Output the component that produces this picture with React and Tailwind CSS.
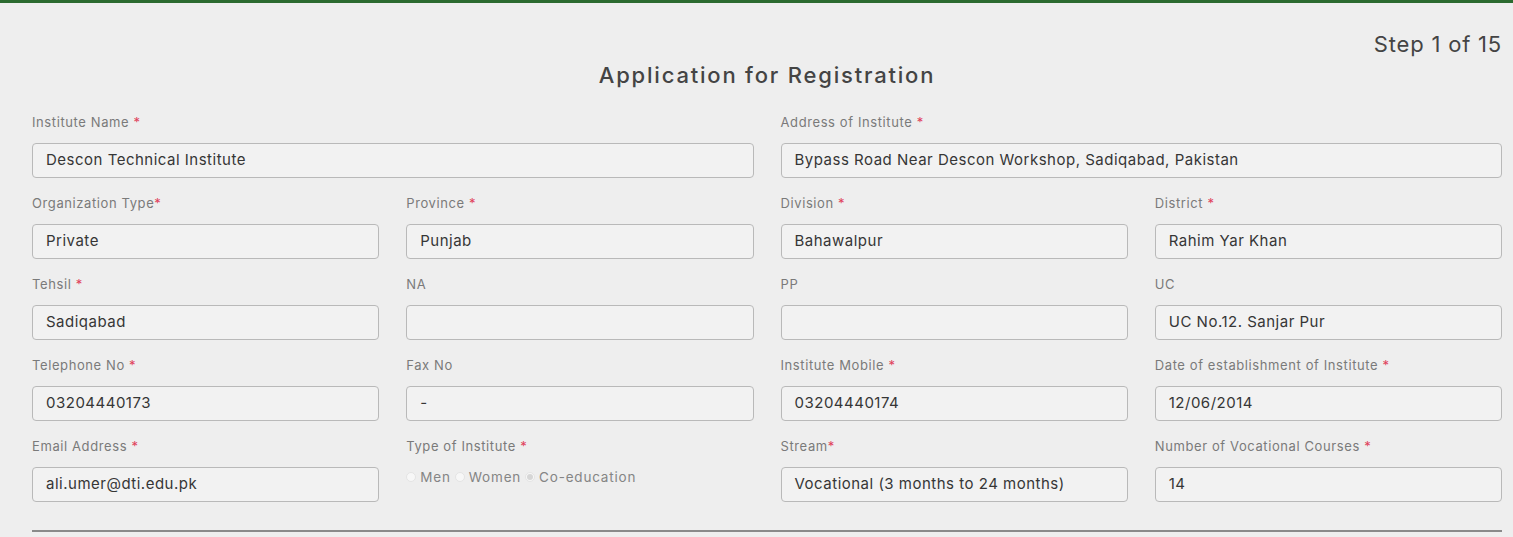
import React from "react";

const fields = [
  { label: "Institute Name", req: " *", value: "Descon Technical Institute", span: 2 },
  { label: "Address of Institute", req: " *", value: "Bypass Road Near Descon Workshop, Sadiqabad, Pakistan", span: 2 },
  { label: "Organization Type", req: "*", value: "Private" },
  { label: "Province", req: " *", value: "Punjab" },
  { label: "Division", req: " *", value: "Bahawalpur" },
  { label: "District", req: " *", value: "Rahim Yar Khan" },
  { label: "Tehsil", req: " *", value: "Sadiqabad" },
  { label: "NA", value: "" },
  { label: "PP", value: "" },
  { label: "UC", value: "UC No.12. Sanjar Pur" },
  { label: "Telephone No", req: " *", value: "03204440173" },
  { label: "Fax No", value: "-" },
  { label: "Institute Mobile", req: " *", value: "03204440174" },
  { label: "Date of establishment of Institute", req: " *", value: "12/06/2014" },
  { label: "Email Address", req: " *", value: "ali.umer@dti.edu.pk" },
  { label: "Type of Institute", req: " *", radio: true },
  { label: "Stream", req: "*", value: "Vocational (3 months to 24 months)" },
  { label: "Number of Vocational Courses", req: " *", value: "14" },
];

const Radio = ({ label, checked }) => (
  <label className="flex items-center gap-[4px]">
    <span className="w-[10px] h-[10px] rounded-full border border-[#e4e4e4] bg-[#f7f7f7] flex items-center justify-center">
      {checked && <span className="w-[6px] h-[6px] rounded-full bg-[#d6d6d6]" />}
    </span>
    <span>{label}</span>
  </label>
);

const Field = ({ field }) => (
  <div className={field.span === 2 ? "col-span-2" : ""}>
    <div className="text-[13px] leading-4 tracking-[0.6px] text-[#7a7a7a] mb-[13px]">
      {field.label}
      {field.req && <span className="text-[#e0405a]">{field.req}</span>}
    </div>
    {field.radio ? (
      <div className="flex items-center gap-[4px] text-[13.5px] tracking-[0.8px] text-[#858585] h-[20px]">
        <Radio label="Men" />
        <Radio label="Women" />
        <Radio label="Co-education" checked />
      </div>
    ) : (
      <div className="h-[35px] rounded-[4px] border border-[#b9b9b9] bg-[#f2f2f2] px-[13px] flex items-center text-[15px] tracking-[0.5px] text-[#363636]">
        {field.value}
      </div>
    )}
  </div>
);

export default function App() {
  return (
    <div
      className="min-h-[537px] bg-[#eeeeee] border-t-[3px] border-[#2b6a2f] pl-[32px] pr-[11px]"
      style={{ fontFamily: "Inter, 'Noto Sans', sans-serif" }}
    >
      <div className="flex justify-end pt-[27px]">
        <div className="text-[22px] leading-7 tracking-[0.8px] text-[#444]">Step 1 of 15</div>
      </div>
      <h1 className="text-center text-[22px] leading-7 tracking-[1.8px] font-medium text-[#444] mt-[3px]">
        Application for Registration
      </h1>
      <div className="grid grid-cols-4 gap-x-[27px] gap-y-[17px] mt-[25px]">
        {fields.map((f, idx) => (
          <Field key={idx} field={f} />
        ))}
      </div>
      <div className="mt-[28px] h-[2px] bg-[#8a8a8a]" />
    </div>
  );
}
